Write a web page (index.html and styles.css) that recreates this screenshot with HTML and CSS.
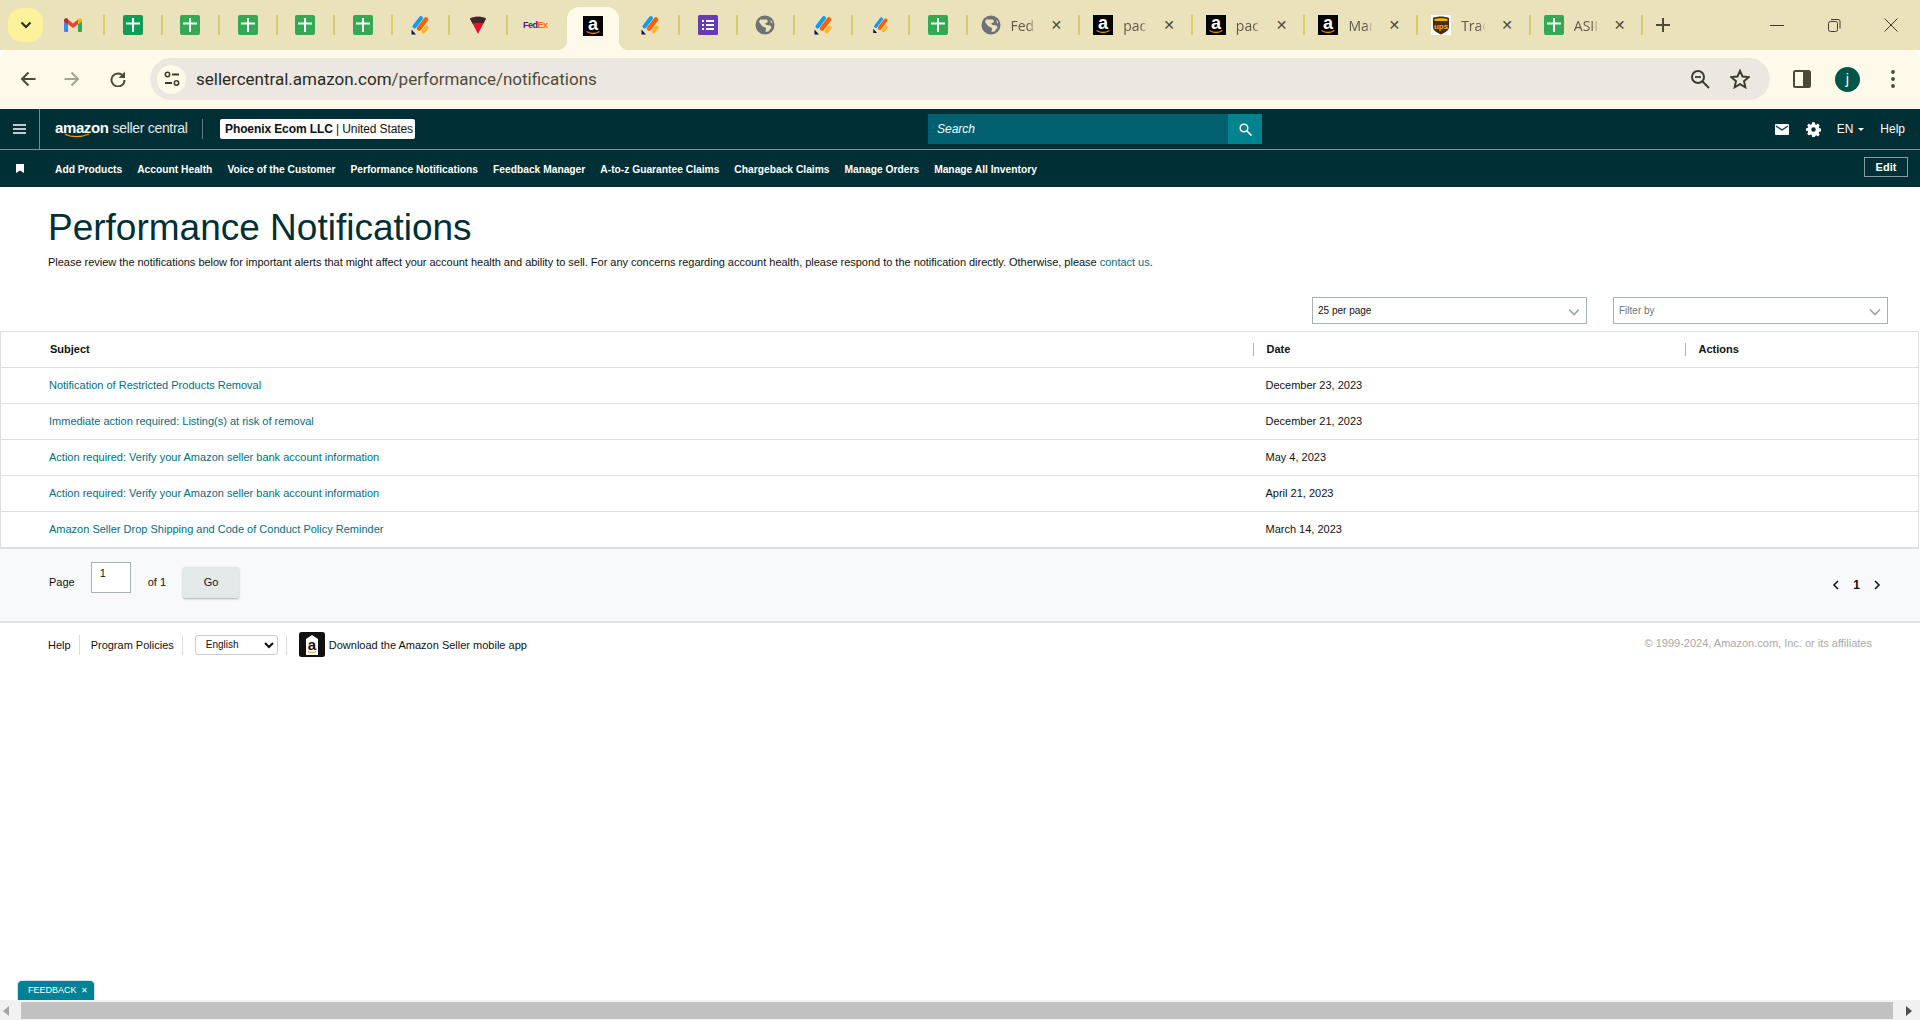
FILE: index.html
```html
<!DOCTYPE html>
<html lang="en">
<head>
    <meta charset="UTF-8">
    <title>Performance Notifications</title>
    <link rel="stylesheet" href="styles.css">
</head>
<body>
<svg class="defs" width="0" height="0">
    <symbol id="i-gmail" viewBox="0 0 20 20">
        <path d="M1 5.5v10.2c0 .7.5 1.3 1.2 1.3H5V9z" fill="#4285f4"/>
        <path d="M19 5.5v10.2c0 .7-.5 1.3-1.2 1.3H15V9z" fill="#34a853"/>
        <path d="M5 9.2V4.6l5 3.8 5-3.8v4.6l-5 3.8z" fill="#ea4335"/>
        <path d="M1 5.5C1 3.7 3.1 2.7 4.500 3.800L5 4.200V9.200L1 6.200z" fill="#c5221f"/>
        <path d="M19 5.500C19 3.700 16.900 2.700 15.500 3.800L15 4.200V9.200L19 6.200z" fill="#fbbc04"/>
    </symbol>
    <symbol id="i-sheet" viewBox="0 0 20 20">
        <rect class="sheet-bg" width="20" height="20" rx="2"/>
        <path d="M9 3h2v4.500h6v2h-6V17H9V9.500H3v-2h6z" fill="#fff"/>
    </symbol>
    <symbol id="i-jot" viewBox="0 0 20 20">
        <path d="M4.500 11.500l6.500-8.500" stroke="#0a9cff" stroke-width="4" stroke-linecap="round"/>
        <path d="M9 13.500L16 4.500" stroke="#ff6100" stroke-width="4.500" stroke-linecap="round"/>
        <path d="M13.500 16.500l3-4" stroke="#ffb629" stroke-width="4" stroke-linecap="round"/>
        <path d="M1.500 14.500V19.500H6z" fill="#0a1551"/>
    </symbol>
    <symbol id="i-globe" viewBox="0 0 20 20">
        <circle cx="10" cy="10" r="9.500" fill="#6e7176"/>
        <path d="M5 4.500h7l1 2.500-3 1.500 1.500 1.500 4 .5 1 2-3 4-3 .5 .5-4-4-2-3-4zM15 5l2.500 2-1 1.500z" fill="#e9e2bb"/>
    </symbol>
    <symbol id="i-form" viewBox="0 0 20 20">
        <rect width="20" height="20" rx="1.500" fill="#673ab7"/>
        <path d="M4 5h2v2H4zM8 5h8v2H8zM4 9h2v2H4zM8 9h8v2H8zM4 13h2v2H4zM8 13h8v2H8z" fill="#fff"/>
    </symbol>
    <symbol id="i-amazon" viewBox="0 0 20 20">
        <rect width="20" height="20" fill="#000"/>
        <text x="10" y="13.500" text-anchor="middle" class="amz-letter">a</text>
        <path d="M3.500 15.500c4 2.500 9 2.500 13 0" fill="none" stroke="#e88b1a" stroke-width="1.300"/>
    </symbol>
    <symbol id="i-chev" viewBox="0 0 12 8">
        <path d="M1 1.500l5 5 5-5" fill="none" stroke="#9aa5a5" stroke-width="1.600"/>
    </symbol>
</svg>

<div class="page">
    <div class="tabstrip">
        <div class="tab-search">
            <svg width="12" height="8" viewBox="0 0 12 8"><path d="M1.500 1.500L6 6l4.500-4.500" fill="none" stroke="#2d2a1a" stroke-width="2"/></svg>
        </div>
        <div class="tab tab-first"><svg class="fav"><use href="#i-gmail"/></svg></div>
        <div class="tab"><svg class="fav fav-dark"><use href="#i-sheet"/></svg></div>
        <div class="tab"><svg class="fav"><use href="#i-sheet"/></svg></div>
        <div class="tab"><svg class="fav"><use href="#i-sheet"/></svg></div>
        <div class="tab"><svg class="fav"><use href="#i-sheet"/></svg></div>
        <div class="tab"><svg class="fav"><use href="#i-sheet"/></svg></div>
        <div class="tab"><svg class="fav"><use href="#i-jot"/></svg></div>
        <div class="tab">
            <svg class="fav" viewBox="0 0 20 20">
                <path d="M2 3.500C6 1 14 1 18 3.500L10 19z" fill="#e8112d"/>
                <path d="M2 3.500C6 1 14 1 18 3.500L15.500 8.500C12 7.500 8 7.500 4.500 8.500z" fill="#3a2a2a"/>
            </svg>
        </div>
        <div class="tab tab-noline"><span class="fedex"><b>Fed</b><i>Ex</i></span></div>
        <div class="tab tab-active"><svg class="fav"><use href="#i-amazon"/></svg></div>
        <div class="tab"><svg class="fav"><use href="#i-jot"/></svg></div>
        <div class="tab"><svg class="fav"><use href="#i-form"/></svg></div>
        <div class="tab"><svg class="fav"><use href="#i-globe"/></svg></div>
        <div class="tab"><svg class="fav"><use href="#i-jot"/></svg></div>
        <div class="tab"><svg class="fav fav-small"><use href="#i-jot"/></svg></div>
        <div class="tab"><svg class="fav"><use href="#i-sheet"/></svg></div>
        <div class="tab tab-wide">
            <svg class="fav"><use href="#i-globe"/></svg><span class="tab-title">Fed</span><span class="tab-x">✕</span>
        </div>
        <div class="tab tab-wide">
            <svg class="fav"><use href="#i-amazon"/></svg><span class="tab-title">pac</span><span class="tab-x">✕</span>
        </div>
        <div class="tab tab-wide">
            <svg class="fav"><use href="#i-amazon"/></svg><span class="tab-title">pac</span><span class="tab-x">✕</span>
        </div>
        <div class="tab tab-wide">
            <svg class="fav"><use href="#i-amazon"/></svg><span class="tab-title">Mar</span><span class="tab-x">✕</span>
        </div>
        <div class="tab tab-wide">
            <svg class="fav" viewBox="0 0 20 20">
                <rect width="20" height="20" fill="#fff"/>
                <path d="M2 3C6 1 14 1 18 3V12C18 16 13 18 10 19.500C7 18 2 16 2 12z" fill="#4a2a10"/>
                <path d="M3.500 4C7 3 13 3 16.500 4V6H3.500z" fill="#f7b500"/>
                <text x="10" y="13.500" text-anchor="middle" class="ups-text">ups</text>
            </svg><span class="tab-title">Trac</span><span class="tab-x">✕</span>
        </div>
        <div class="tab tab-wide">
            <svg class="fav"><use href="#i-sheet"/></svg><span class="tab-title">ASII</span><span class="tab-x">✕</span>
        </div>
        <svg class="new-tab" width="14" height="14" viewBox="0 0 14 14"><path d="M7 0v14M0 7h14" stroke="#4c4a36" stroke-width="2"/></svg>
        <div class="win-controls">
            <svg width="14" height="14" viewBox="0 0 14 14"><path d="M0 7.500h14" stroke="#3d3b2c" stroke-width="1"/></svg>
            <svg width="14" height="14" viewBox="0 0 14 14"><rect x="1.500" y="3.500" width="9" height="10" rx="2" fill="none" stroke="#3d3b2c"/><path d="M4 1.500h7a2 2 0 0 1 2 2v7" fill="none" stroke="#3d3b2c"/></svg>
            <svg width="14" height="14" viewBox="0 0 14 14"><path d="M.5.500l13 13M13.500.500l-13 13" stroke="#3d3b2c" stroke-width="1"/></svg>
        </div>
    </div>

    <div class="toolbar">
        <svg class="tool tool-back" width="16" height="16" viewBox="0 0 16 16"><path d="M15.500 8H2M8.500 1.500L2 8l6.500 6.500" fill="none" stroke="#4c4a36" stroke-width="2"/></svg>
        <svg class="tool tool-fwd" width="16" height="16" viewBox="0 0 16 16"><path d="M.5 8H14M7.500 1.500L14 8l-6.500 6.500" fill="none" stroke="#a5a393" stroke-width="2"/></svg>
        <svg class="tool tool-reload" width="16" height="16" viewBox="0 0 16 16"><path d="M13.500 5.500A6.500 6.500 0 1 0 14.500 9" fill="none" stroke="#4c4a36" stroke-width="2"/><path d="M15 .5V7H8.500z" fill="#4c4a36"/></svg>
        <div class="omnibox">
            <span class="site-icon">
                <svg width="16" height="16" viewBox="0 0 16 16"><circle cx="3.500" cy="3.500" r="2.200" fill="none" stroke="#3d3b2c" stroke-width="1.500"/><path d="M8 3.500h7M1 12h7" stroke="#3d3b2c" stroke-width="2"/><circle cx="12.500" cy="12" r="2.200" fill="none" stroke="#3d3b2c" stroke-width="1.500"/></svg>
            </span>
            <span class="url"><b>sellercentral.amazon.com</b>/performance/notifications</span>
            <svg class="omni-zoom" width="20" height="20" viewBox="0 0 20 20"><circle cx="8" cy="8" r="6" fill="none" stroke="#3d3b2c" stroke-width="2"/><path d="M12.500 12.500L19 19" stroke="#3d3b2c" stroke-width="2"/><path d="M5 8h6" stroke="#3d3b2c" stroke-width="1.800"/></svg>
            <svg class="omni-star" width="20" height="20" viewBox="0 0 20 20"><path d="M10 1.800l2.500 5.700 6.200.6-4.700 4.100 1.400 6.100-5.400-3.200-5.400 3.200 1.400-6.100-4.700-4.100 6.200-.6z" fill="none" stroke="#3d3b2c" stroke-width="1.900"/></svg>
        </div>
        <svg class="tool-panel" width="18" height="18" viewBox="0 0 18 18"><rect x="1" y="1" width="16" height="16" rx="1.500" fill="none" stroke="#4c4a36" stroke-width="2"/><rect x="10" y="1" width="7" height="16" fill="#4c4a36"/></svg>
        <span class="avatar">j</span>
        <svg class="tool-menu" width="4" height="18" viewBox="0 0 4 18"><circle cx="2" cy="2" r="1.900" fill="#4c4a36"/><circle cx="2" cy="9" r="1.900" fill="#4c4a36"/><circle cx="2" cy="16" r="1.900" fill="#4c4a36"/></svg>
    </div>

    <header class="topbar">
        <div class="burger-cell">
            <svg width="13" height="10" viewBox="0 0 13 10"><path d="M0 1h13M0 5h13M0 9h13" stroke="#fff" stroke-width="1.500"/></svg>
        </div>
        <div class="logo">
            <span class="logo-amazon">amazon<svg class="logo-smile" width="26" height="5" viewBox="0 0 26 5"><path d="M1 1c6 3.500 16 3.500 24 0" fill="none" stroke="#f90" stroke-width="1.200"/></svg></span>
            <span class="logo-seller">seller central</span>
        </div>
        <div class="account-box"><b>Phoenix Ecom LLC</b> | United States</div>
        <div class="searchbox">
            <span class="search-input">Search</span>
            <span class="search-btn">
                <svg width="13" height="13" viewBox="0 0 13 13"><circle cx="5" cy="5" r="3.800" fill="none" stroke="#fff" stroke-width="1.500"/><path d="M8 8l4.500 4.500" stroke="#fff" stroke-width="1.700"/></svg>
            </span>
        </div>
        <div class="top-right">
            <svg width="14" height="11" viewBox="0 0 14 11"><rect width="14" height="11" rx="1" fill="#fff"/><path d="M1 2l6 4 6-4" fill="none" stroke="#002f36" stroke-width="1.200"/></svg>
            <svg width="15" height="15" viewBox="0 0 15 15"><path d="M6 0h3l.4 2.100 1.300.6L12.500 1.500l2 2-1.200 1.800.6 1.300 2.100.4v3l-2.100.4-.6 1.300 1.200 1.800-2 2-1.800-1.200-1.300.6L9 16H6l-.4-2.100-1.300-.6-1.800 1.200-2-2 1.200-1.800-.6-1.300L-1 9.600v-3l2.100-.4.600-1.300L.5 3.500l2-2 1.800 1.200 1.300-.6z" transform="translate(.7 .2) scale(.9 .92)" fill="#fff"/><circle cx="7.500" cy="7.500" r="2.200" fill="#002f36"/></svg>
            <span class="lang">EN<i class="caret"></i></span>
            <span class="help">Help</span>
        </div>
    </header>

    <nav class="subbar">
        <svg class="bookmark" width="8" height="9" viewBox="0 0 8 9"><path d="M0 0h8v9L4 6.500 0 9z" fill="#fff"/></svg>
        <a>Add Products</a>
        <a>Account Health</a>
        <a>Voice of the Customer</a>
        <a>Performance Notifications</a>
        <a>Feedback Manager</a>
        <a>A-to-z Guarantee Claims</a>
        <a>Chargeback Claims</a>
        <a>Manage Orders</a>
        <a>Manage All Inventory</a>
        <span class="edit-btn">Edit</span>
    </nav>

    <main class="content">
        <div class="intro">
            <h1>Performance Notifications</h1>
            <p>Please review the notifications below for important alerts that might affect your account health and ability to sell. For any concerns regarding account health, please respond to the notification directly. Otherwise, please <a>contact us</a>.</p>
        </div>

        <div class="filters">
            <div class="dropdown">25 per page<svg width="12" height="8"><use href="#i-chev"/></svg></div>
            <div class="dropdown dropdown-muted">Filter by<svg width="12" height="8"><use href="#i-chev"/></svg></div>
        </div>

        <table class="notif-table">
            <colgroup><col class="col-subject"><col class="col-date"><col></colgroup>
            <thead>
                <tr>
                    <th><div class="th-first">Subject</div></th>
                    <th><div>Date</div></th>
                    <th><div>Actions</div></th>
                </tr>
            </thead>
            <tbody>
                <tr><td><a>Notification of Restricted Products Removal</a></td><td>December 23, 2023</td><td></td></tr>
                <tr><td><a>Immediate action required: Listing(s) at risk of removal</a></td><td>December 21, 2023</td><td></td></tr>
                <tr><td><a>Action required: Verify your Amazon seller bank account information</a></td><td>May 4, 2023</td><td></td></tr>
                <tr><td><a>Action required: Verify your Amazon seller bank account information</a></td><td>April 21, 2023</td><td></td></tr>
                <tr><td><a>Amazon Seller Drop Shipping and Code of Conduct Policy Reminder</a></td><td>March 14, 2023</td><td></td></tr>
            </tbody>
        </table>

        <div class="pager">
            <span>Page</span>
            <input class="page-input" value="1">
            <span>of 1</span>
            <span class="go-btn">Go</span>
            <div class="pager-right">
                <svg width="7" height="10" viewBox="0 0 7 10"><path d="M6 1L2 5l4 4" fill="none" stroke="#0f1111" stroke-width="1.500"/></svg>
                <b>1</b>
                <svg width="7" height="10" viewBox="0 0 7 10"><path d="M1 1l4 4-4 4" fill="none" stroke="#0f1111" stroke-width="1.500"/></svg>
            </div>
        </div>

        <footer class="footer">
            <span class="foot-link">Help</span>
            <span class="foot-link">Program Policies</span>
            <span class="foot-lang">
                <select class="lang-select"><option>English</option></select>
            </span>
            <svg class="app-icon" width="26" height="25" viewBox="0 0 26 25">
                <rect width="26" height="25" rx="2.500" fill="#111"/>
                <path d="M7 7l6-4 6 4v16H7z" fill="#fff"/>
                <text x="13" y="18" text-anchor="middle" class="app-letter">a</text>
                <path d="M9 19.500c3 1.500 6 1.500 8 0" fill="none" stroke="#f90" stroke-width="1"/>
            </svg>
            <span class="foot-app">Download the Amazon Seller mobile app</span>
            <span class="copyright">© 1999-2024, Amazon.com, Inc. or its affiliates</span>
        </footer>
    </main>

    <div class="hscroll">
        <span class="arrow-left"></span>
        <span class="thumb"></span>
        <span class="arrow-right"></span>
    </div>

    <div class="feedback">FEEDBACK <span class="feedback-x">✕</span></div>
</div>
</body>
</html>
```

FILE: styles.css
```css
* {
    box-sizing: border-box;
}
body {
    margin: 0;
    font-family: "Liberation Sans", Arial, sans-serif;
    font-size: 11px;
    color: #0f1111;
    background-color: #fff;
}
a {
    color: inherit;
    text-decoration: none;
}
.defs {
    display: block;
    height: 0;
}
.sheet-bg {
    fill: var(--sheet, #34a853);
}
.fav-dark {
    --sheet: #0f9d58;
}
.amz-letter {
    font-family: "Liberation Sans", sans-serif;
    font-size: 18px;
    font-weight: bold;
    fill: #fff;
}
.ups-text {
    font-family: "Liberation Sans", sans-serif;
    font-size: 8px;
    font-weight: bold;
    fill: #f7b500;
}
.app-letter {
    font-family: "Liberation Sans", sans-serif;
    font-size: 15px;
    font-weight: bold;
    fill: #111;
}
.page {
    position: relative;
    display: flex;
    flex-direction: column;
    width: 1920px;
    height: 1020px;
    overflow: hidden;
}

/* browser tab strip */
.tabstrip {
    display: flex;
    align-items: center;
    height: 50px;
    flex: none;
    padding-left: 8px;
    background-color: #e9e2bb;
}
.tab-search {
    display: flex;
    align-items: center;
    justify-content: center;
    width: 35px;
    height: 34px;
    border-radius: 14px;
    background-color: #fdf29b;
}
.tab {
    display: flex;
    align-items: center;
    justify-content: center;
    width: 57.5px;
    height: 20px;
    flex: none;
    border-right: 2px solid #d8ca6e;
}
.tab-first {
    width: 62px;
}
.tab-noline {
    border-right-color: transparent;
}
.tab-active {
    position: relative;
    align-self: flex-end;
    height: 43px;
    padding-bottom: 6px;
    margin: 0 4px 0 2px;
    width: 51.500px;
    border-right: 0;
    border-radius: 12px 12px 0 0;
    background-color: #fff9ea;
}
.tab-active::before,
.tab-active::after {
    content: "";
    position: absolute;
    bottom: 0;
    width: 10px;
    height: 10px;
}
.tab-active::before {
    left: -10px;
    background: radial-gradient(circle at 0 0, transparent 10px, #fff9ea 10.5px);
}
.tab-active::after {
    right: -10px;
    background: radial-gradient(circle at 100% 0, transparent 10px, #fff9ea 10.5px);
}
.tab-wide {
    justify-content: flex-start;
    width: 112.67px;
    padding-left: 13px;
}
.fav {
    width: 20px;
    height: 20px;
    flex: none;
}
.fav-small {
    width: 17px;
    height: 20px;
}
.fedex {
    font-size: 9px;
    font-weight: bold;
    letter-spacing: -0.5px;
}
.fedex b {
    color: #4d148c;
}
.fedex i {
    font-style: normal;
    color: #ff6600;
}
.tab-title {
    width: 29px;
    margin-left: 10px;
    white-space: nowrap;
    font-family: "Open Sans", sans-serif;
    font-size: 14px;
    color: #5f5b45;
    -webkit-mask-image: linear-gradient(to right, #000 62%, transparent 85%);
    mask-image: linear-gradient(to right, #000 62%, transparent 85%);
}
.tab-x {
    margin-left: 11px;
    font-family: "DejaVu Sans", sans-serif;
    font-size: 14px;
    font-weight: bold;
    line-height: 16px;
    color: #4c4a36;
}
.new-tab {
    margin-left: 13px;
}
.win-controls {
    display: flex;
    gap: 43px;
    margin-left: auto;
    margin-right: 22px;
}

/* browser toolbar */
.toolbar {
    display: flex;
    align-items: center;
    height: 59px;
    flex: none;
    padding: 0 20px 1px;
    border-radius: 10px 10px 0 0;
    background-color: #fff9ea;
}
.tool-fwd {
    margin-left: 28px;
}
.tool-reload {
    margin-left: 30px;
}
.omnibox {
    display: flex;
    align-items: center;
    width: 1620px;
    height: 42px;
    margin-left: 24px;
    padding-left: 7px;
    border-radius: 21px;
    background-color: #ece8e1;
}
.site-icon {
    display: flex;
    align-items: center;
    justify-content: center;
    width: 29px;
    height: 29px;
    border-radius: 50%;
    background-color: #fff9ea;
}
.url {
    margin-left: 10px;
    font-family: Roboto, sans-serif;
    font-size: 17px;
    color: #4f4c39;
}
.url b {
    font-weight: normal;
    color: #2b2a1e;
}
.omni-zoom {
    margin-left: auto;
}
.omni-star {
    margin-left: 20px;
    margin-right: 20px;
}
.tool-panel {
    margin-left: 23px;
}
.avatar {
    display: flex;
    align-items: center;
    justify-content: center;
    width: 25px;
    height: 25px;
    margin-left: 24px;
    border-radius: 50%;
    font-family: Roboto, sans-serif;
    font-size: 14px;
    color: #fff;
    background-color: #00554a;
}
.tool-menu {
    margin-left: 31px;
}

/* seller central header */
.topbar {
    display: flex;
    align-items: center;
    height: 41px;
    flex: none;
    border-bottom: 1px solid #7f9494;
    color: #fff;
    background-color: #002f36;
}
.burger-cell {
    display: flex;
    align-items: center;
    justify-content: center;
    width: 40px;
    height: 40px;
    border-right: 1px solid #6f8788;
}
.logo {
    display: flex;
    align-items: baseline;
    width: 148px;
    height: 20px;
    margin-left: 15px;
    border-right: 1px solid #5f7a7c;
}
.logo-amazon {
    position: relative;
    font-size: 15px;
    font-weight: bold;
    letter-spacing: -0.4px;
    line-height: 18px;
}
.logo-smile {
    position: absolute;
    left: 9px;
    top: 14px;
}
.logo-seller {
    margin-left: 4px;
    font-size: 14px;
    letter-spacing: -0.3px;
    line-height: 18px;
    white-space: nowrap;
    color: #e4e8e8;
}
.account-box {
    width: 195px;
    height: 20px;
    margin-left: 17px;
    padding-left: 5px;
    border-radius: 2px;
    font-size: 12px;
    letter-spacing: -0.1px;
    line-height: 20px;
    white-space: nowrap;
    color: #0f1111;
    background-color: #fff;
}
.searchbox {
    display: flex;
    width: 334px;
    height: 30px;
    margin-left: 513px;
}
.search-input {
    flex: 1;
    padding-left: 9px;
    font-size: 12px;
    font-style: italic;
    line-height: 30px;
    background-color: #00606f;
}
.search-btn {
    display: flex;
    align-items: center;
    justify-content: center;
    width: 34px;
    background-color: #00838f;
}
.top-right {
    display: flex;
    align-items: center;
    margin-left: auto;
    padding-right: 15px;
    font-size: 12px;
}
.top-right svg + svg {
    margin-left: 17px;
}
.lang {
    display: flex;
    align-items: center;
    margin-left: 16px;
}
.caret {
    width: 0;
    height: 0;
    margin-left: 5px;
    border: 3px solid transparent;
    border-top: 3.500px solid #fff;
    border-bottom: 0;
}
.help {
    margin-left: 16px;
}
.subbar {
    display: flex;
    align-items: center;
    gap: 15px;
    height: 37px;
    flex: none;
    padding: 2px 12px 0 16px;
    font-size: 10.25px;
    font-weight: bold;
    color: #fff;
    background-color: #002f36;
}
.bookmark {
    margin-right: 16px;
    margin-bottom: 2px;
}
.edit-btn {
    width: 44px;
    height: 20px;
    margin-left: auto;
    margin-bottom: 5px;
    border: 1px solid #8a9a9c;
    font-size: 11px;
    line-height: 18px;
    text-align: center;
}

/* page content */
.content {
    flex: 1;
    min-height: 0;
}
.intro {
    height: 110px;
    padding: 18px 48px 0;
}
.intro h1 {
    margin: 0;
    font-size: 37px;
    font-weight: normal;
    line-height: 46px;
    color: #002f36;
}
.intro p {
    margin: 3px 0 0;
    font-size: 11px;
    letter-spacing: -0.02px;
    line-height: 16px;
}
.intro p a {
    color: #00707f;
}
.filters {
    display: flex;
    justify-content: flex-end;
    gap: 26px;
    height: 34px;
    padding-right: 32px;
}
.dropdown {
    display: flex;
    align-items: center;
    justify-content: space-between;
    width: 275px;
    height: 27px;
    padding: 0 6px 1px 5px;
    border: 1px solid #a6b2b0;
    font-size: 10px;
}
.dropdown svg {
    margin-top: 4px;
}
.dropdown-muted {
    color: #6b7778;
}
.notif-table {
    width: 1919px;
    border-collapse: collapse;
    table-layout: fixed;
    border: 1px solid #dcdfdf;
    border-bottom-width: 2px;
}
.col-subject {
    width: 1252px;
}
.col-date {
    width: 432px;
}
.notif-table th {
    height: 36px;
    padding: 0;
    font-size: 11px;
    text-align: left;
}
.notif-table th div {
    height: 13px;
    padding-left: 13px;
    border-left: 1px solid #aab5b5;
    line-height: 13px;
}
.notif-table th .th-first {
    padding-left: 49px;
    border-left: 0;
}
.notif-table td {
    height: 36px;
    padding: 0 0 1px 13px;
    border-top: 1px solid #dcdfdf;
    font-size: 11px;
}
.notif-table td:first-child {
    padding-left: 48px;
}
.notif-table td a {
    color: #00707f;
}
.pager {
    display: flex;
    align-items: center;
    height: 74px;
    padding: 0 39px 5px 49px;
    border-bottom: 2px solid #e3e3e6;
    font-size: 11px;
    background-color: #f8f9fb;
}
.page-input {
    width: 40px;
    height: 31px;
    margin: -9px 17px 0 16px;
    padding: 0 0 9px 8px;
    border: 1px solid #a6b2b0;
    border-radius: 0;
    font-family: inherit;
    font-size: 11px;
    color: #0f1111;
    background-color: #fff;
}
.go-btn {
    flex: none;
    width: 56px;
    height: 31px;
    margin-left: 17px;
    border-radius: 2px;
    line-height: 31px;
    text-align: center;
    background-color: #e3e9e9;
    box-shadow: 0 1px 2px rgba(0, 0, 0, 0.3);
}
.pager-right {
    display: flex;
    align-items: center;
    gap: 14px;
    margin-left: auto;
    margin-top: 6px;
    font-size: 12px;
}
.footer {
    display: flex;
    align-items: center;
    height: 48px;
    padding: 0 48px 4px;
    font-size: 11px;
}
.foot-link {
    padding-right: 8px;
    margin-right: 11px;
    border-right: 1px solid #dddddd;
    line-height: 20px;
}
.foot-lang {
    display: flex;
    align-items: center;
    height: 20px;
    padding-right: 8px;
    margin-right: 12px;
    margin-left: 1px;
    border-right: 1px solid #dddddd;
}
.lang-select {
    width: 83px;
    height: 20px;
    padding-left: 6px;
    border: 1px solid #c8cccc;
    border-radius: 3px;
    font-family: inherit;
    font-size: 10px;
    color: #0f1111;
    background-color: #fff;
}
.foot-app {
    margin-left: 4px;
}
.copyright {
    margin-left: auto;
    margin-bottom: 4px;
    color: #a8a8a8;
}

/* fake horizontal scrollbar */
.hscroll {
    display: flex;
    align-items: center;
    height: 20px;
    flex: none;
    background-color: #f1f1f1;
}
.arrow-left,
.arrow-right {
    position: relative;
    display: block;
    width: 21px;
    height: 17px;
    flex: none;
}
.arrow-left::before,
.arrow-right::before {
    content: "";
    position: absolute;
    top: 4px;
    border: 5px solid transparent;
}
.arrow-left::before {
    left: 3px;
    border-right: 6px solid #a3a3a3;
    border-left: 0;
}
.arrow-right {
    width: 27px;
}
.arrow-right::before {
    right: 8px;
    border-left: 6px solid #505050;
    border-right: 0;
}
.thumb {
    flex: 1;
    height: 17px;
    background-color: #c1c1c1;
}
.feedback {
    position: absolute;
    left: 17px;
    bottom: 20px;
    width: 78px;
    height: 20px;
    padding-left: 10px;
    border: 1px solid #cfe3e6;
    border-bottom: 0;
    border-radius: 5px 5px 0 0;
    font-size: 9px;
    line-height: 19px;
    color: #fff;
    white-space: nowrap;
    background-color: #008296;
}
.feedback-x {
    margin-left: 2px;
    font-family: "DejaVu Sans", sans-serif;
    font-size: 8px;
}
```
